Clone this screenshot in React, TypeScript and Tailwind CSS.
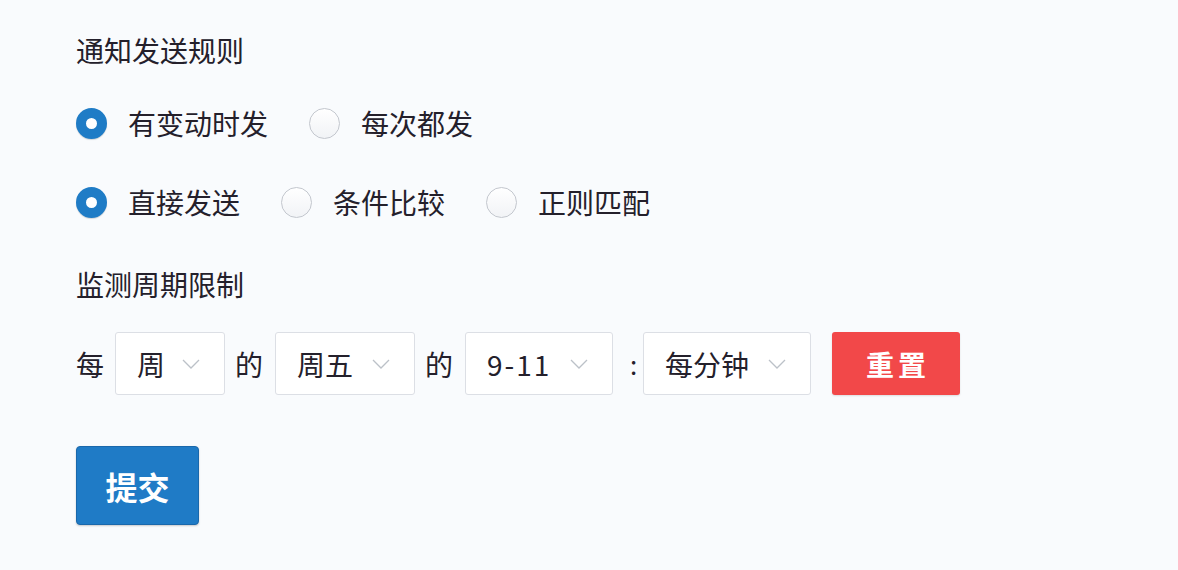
import React from "react";

const Radio = ({ checked, label }: { checked?: boolean; label: string }) => (
  <div className="flex items-center gap-[21px]">
    {checked ? (
      <span className="box-border h-[31px] w-[31px] rounded-full border-[10px] border-[#1f7cc6] bg-white shadow-[0_1px_1px_rgba(0,0,0,0.15)]" />
    ) : (
      <span className="box-border h-[31px] w-[31px] rounded-full border border-[#c3c7ce] bg-gradient-to-b from-white to-[#f1f3f6]" />
    )}
    <span className="text-[28px] leading-[31px]">{label}</span>
  </div>
);

const Chevron = () => (
  <svg width="18" height="10" viewBox="0 0 18 10" fill="none">
    <path d="M1 1 L9 9 L17 1" stroke="#bcc1c8" strokeWidth="1.3" />
  </svg>
);

const Select = ({ value, w, mono }: { value: string; w: string; mono?: boolean }) => (
  <div
    className={`box-border flex h-[63px] items-center justify-between rounded-[3px] border border-[#dcdfe5] bg-white pl-[21px] pr-[24px] ${w}`}
  >
    <span className={`text-[28px] leading-[30px] ${mono ? "tracking-[2px]" : ""}`}>{value}</span>
    <Chevron />
  </div>
);

export default function App() {
  return (
    <div
      className="box-border min-h-[570px] w-[1178px] bg-[#f9fbfd] pl-[76px] pt-[36px] text-[#24202b]"
      style={{ fontFamily: '"Noto Sans CJK SC", "Noto Sans", sans-serif' }}
    >
      <div className="text-[28px] leading-[28px]">通知发送规则</div>

      <div className="mt-[44px] flex items-center gap-[41px]">
        <Radio checked label="有变动时发" />
        <Radio label="每次都发" />
      </div>

      <div className="mt-[48px] flex items-center gap-[41px]">
        <Radio checked label="直接发送" />
        <Radio label="条件比较" />
        <Radio label="正则匹配" />
      </div>

      <div className="mt-[52px] text-[28px] leading-[28px]">监测周期限制</div>

      <div className="mt-[34px] flex items-center">
        <span className="text-[28px] leading-[30px]">每</span>
        <div className="ml-[11px]">
          <Select value="周" w="w-[110px]" />
        </div>
        <span className="ml-[10px] text-[28px] leading-[30px]">的</span>
        <div className="ml-[12px]">
          <Select value="周五" w="w-[140px]" />
        </div>
        <span className="ml-[10px] text-[28px] leading-[30px]">的</span>
        <div className="ml-[12px]">
          <Select value="9-11" w="w-[148px]" mono />
        </div>
        <span className="ml-[11px] w-[19px] text-center text-[26px] leading-[30px]">:</span>
        <div>
          <Select value="每分钟" w="w-[168px]" />
        </div>
        <button className="ml-[21px] flex h-[63px] w-[128px] items-center justify-center gap-[4px] rounded-[3px] bg-[#f24849] text-[28px] font-bold leading-[30px] text-white shadow-[0_1px_2px_rgba(0,0,0,0.12)]">
          <span>重</span>
          <span>置</span>
        </button>
      </div>

      <button className="mt-[51px] flex h-[79px] w-[123px] items-center justify-center rounded-[4px] border border-[#1a68ab] bg-[#1f7bc6] text-[32px] font-bold leading-[34px] text-white shadow-[0_1px_2px_rgba(0,0,0,0.2)]">
        提交
      </button>
    </div>
  );
}
